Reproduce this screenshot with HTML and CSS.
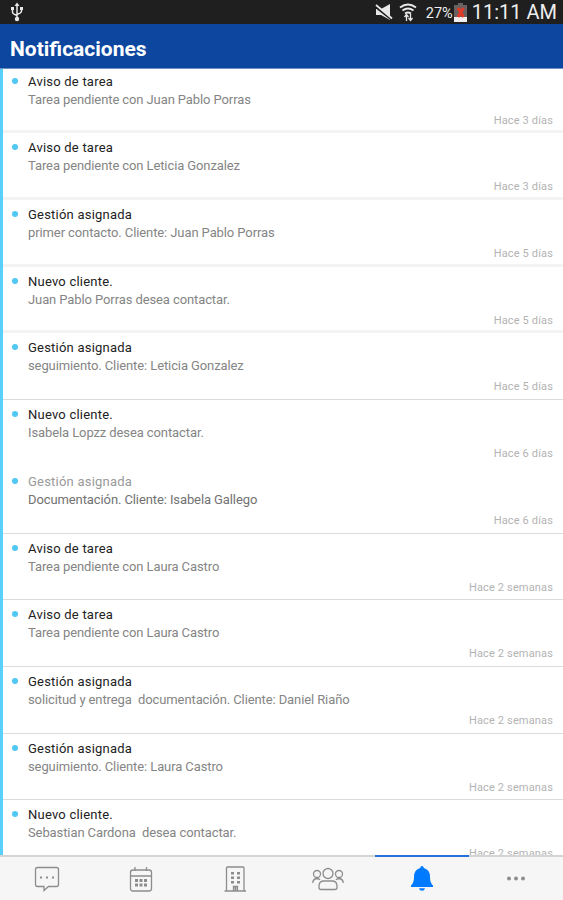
FILE: index.html
```html
<!DOCTYPE html>
<html lang="es">
<head>
<meta charset="utf-8">
<title>Notificaciones</title>
<link rel="stylesheet" href="styles.css">
</head>
<body>
<div class="app">
  <div class="status">
    <svg class="usb" width="14" height="20" viewBox="0 0 14 20" fill="none" stroke="#e8e8e8" stroke-width="1.500"><path d="M7 3v14M2.500 6.500v3.500q0 2 4.500 3.500M11.500 6.500v2.500q0 2-4.500 3.500"/><path d="M7 .5 9.500 4h-5zM1 5h3v3H1zM10 5h3v3h-3z" fill="#e8e8e8" stroke="none"/><circle cx="7" cy="17" r="2.200" fill="#e8e8e8" stroke="none"/></svg>
    <svg class="mute" width="18" height="17" viewBox="0 0 18 17"><path d="M1 5h5l9-5v16l-9-5H1z" fill="#e8e8e8"/><path d="M0 2.500 17 16" stroke="#1f1f1f" stroke-width="2"/><path d="M1 1 17 14.500" stroke="#e8e8e8" stroke-width="1.700"/></svg>
    <svg class="wifi" width="18" height="19" viewBox="0 0 18 19" fill="none" stroke="#e8e8e8" stroke-width="2"><path d="M1 4.500q8-6 16 0M3.500 7.500q5.500-4 11 0M6 10.500q3-2 6 0"/><path d="M7.500 18v-6M5.500 14l2-2.500 2 2.500M11.500 11v6M9.500 15l2 2.500 2-2.500" stroke-width="1.300"/></svg>
    <span class="percent">27%</span>
    <svg class="battery" width="13" height="19" viewBox="0 0 13 19"><path d="M4 0h5v2h4v17H0V2h4z" fill="#68615f"/><path d="M0 14h13v5H0z" fill="#f3eeee"/><path d="M4 5 9.500 14M9.500 5 4 14" stroke="#e23a26" stroke-width="3"/></svg>
    <span class="clock">11:11 AM</span>
  </div>
  <header class="header"><h1>Notificaciones</h1></header>
  <main class="list">
    <article class="row soft"><h2>Aviso de tarea</h2><p>Tarea pendiente con Juan Pablo Porras</p><time>Hace 3 días</time></article>
    <article class="row soft"><h2>Aviso de tarea</h2><p>Tarea pendiente con Leticia Gonzalez</p><time>Hace 3 días</time></article>
    <article class="row soft"><h2>Gestión asignada</h2><p>primer contacto. Cliente: Juan Pablo Porras</p><time>Hace 5 días</time></article>
    <article class="row soft"><h2>Nuevo cliente.</h2><p>Juan Pablo Porras desea contactar.</p><time>Hace 5 días</time></article>
    <article class="row"><h2>Gestión asignada</h2><p>seguimiento. Cliente: Leticia Gonzalez</p><time>Hace 5 días</time></article>
    <article class="row plain"><h2>Nuevo cliente.</h2><p>Isabela Lopzz desea contactar.</p><time>Hace 6 días</time></article>
    <article class="row read"><h2>Gestión asignada</h2><p>Documentación. Cliente: Isabela Gallego</p><time>Hace 6 días</time></article>
    <article class="row"><h2>Aviso de tarea</h2><p>Tarea pendiente con Laura Castro</p><time>Hace 2 semanas</time></article>
    <article class="row"><h2>Aviso de tarea</h2><p>Tarea pendiente con Laura Castro</p><time>Hace 2 semanas</time></article>
    <article class="row"><h2>Gestión asignada</h2><p>solicitud y entrega&nbsp; documentación. Cliente: Daniel Riaño</p><time>Hace 2 semanas</time></article>
    <article class="row"><h2>Gestión asignada</h2><p>seguimiento. Cliente: Laura Castro</p><time>Hace 2 semanas</time></article>
    <article class="row"><h2>Nuevo cliente.</h2><p>Sebastian Cardona&nbsp; desea contactar.</p><time>Hace 2 semanas</time></article>
  </main>
  <nav class="tabs">
    <a><svg width="28" height="28" viewBox="0 0 28 28"><path d="M4.500 2.500h19q2 0 2 2v15q0 2-2 2h-8L11 25.500v-4H4.500q-2 0-2-2v-15q0-2 2-2z"/><path class="fill" d="M7 11.500h2v2H7zM13 11.500h2v2h-2zM19 11.500h2v2h-2z"/></svg></a>
    <a><svg width="28" height="28" viewBox="0 0 28 28"><rect x="3.500" y="5" width="21" height="21" rx="2.500"/><path d="M3.500 11h21M8 2v4M19.500 2v4"/><path class="fill" d="M8 14h3v3H8zM12.500 14h3v3h-3zM17 14h3v3h-3zM8 18.500h3v3H8zM12.500 18.500h3v3h-3zM17 18.500h3v3h-3z"/></svg></a>
    <a><svg width="28" height="28" viewBox="0 0 28 28"><path d="M5.500 26V3q0-1 1-1h15.500q1 0 1 1v23M3.500 26h21.500M12.500 26v-4.500h4V26"/><path class="fill" d="M10 7h3v2.500h-3zM16 7h3v2.500h-3zM10 11.500h3V14h-3zM16 11.500h3V14h-3zM10 16h3v2.500h-3zM16 16h3v2.500h-3zM13.500 22h2v4h-2z"/></svg></a>
    <a><svg width="32" height="28" viewBox="0 0 32 28"><circle cx="16" cy="8.500" r="5"/><circle cx="5" cy="9" r="3.500"/><circle cx="27" cy="9" r="3.500"/><path d="M7 21q0-5 5-5h8q5 0 5 5v1.500q0 2-2 2H9q-2 0-2-2zM.8 18q0-4 4.200-4.500 2 0 3 1.500M31.200 18q0-4-4.200-4.500-2 0-3 1.500"/></svg></a>
    <a class="active"><svg width="28" height="28" viewBox="0 0 28 28"><path class="bell" d="M14 1q1.500 0 1.800 2Q22 4.500 22 12q0 6 3 8.500V22H3v-1.500Q6 18 6 12q0-7.500 6.200-9Q12.500 1 14 1zM11 23.200h6q-.5 2.600-3 2.600t-3-2.600z"/></svg></a>
    <a><svg width="28" height="28" viewBox="0 0 28 28"><g class="more"><circle cx="7" cy="13.500" r="2"/><circle cx="14" cy="13.500" r="2"/><circle cx="21" cy="13.500" r="2"/></g></svg></a>
  </nav>
</div>
</body>
</html>
```
FILE: styles.css
```css
* { box-sizing: border-box; }
body { margin: 0; font-family: Roboto, "Liberation Sans", sans-serif; background: #fff; }
.app { height: 900px; display: flex; flex-direction: column; overflow: hidden; }
.status { flex: none; height: 24px; background: #1f1f1f; color: #eee; display: flex; align-items: center; padding: 0 6px 0 10px; }
.mute { margin-left: auto; }
.wifi { margin-left: 6px; }
.percent { margin-left: 9px; font-size: 14.5px; letter-spacing: 0; padding-top: 2px; }
.battery { margin-left: 1px; }
.clock { margin-left: 5px; font-size: 20px; letter-spacing: 0; }
.header { flex: none; height: 44.500px; background: #0c469f; border-bottom: 1px solid #6f8fc6; display: flex; align-items: center; padding: 6px 10px 0; }
h1 { margin: 0; color: #fff; font-size: 21px; font-weight: 700; line-height: 28px; }
.list { flex: 1; min-height: 0; overflow: hidden; border-left: 3px solid #59d0fb; }
.row { height: 66.720px; border-bottom: 1.500px solid #dcdbdd; padding: 5px 10px 0 25px; position: relative; display: flex; flex-direction: column; }
.row:first-child { height: 64.800px; padding-top: 3px; }
.row.soft { border-bottom: 3px solid #f3f3f3; }
.row.plain { border-bottom-color: transparent; }
.row::before { content: ""; position: absolute; left: 9px; top: 11px; width: 6px; height: 6px; border-radius: 50%; background: #4fc8f4; }
.row:first-child::before { top: 9px; }
h2 { margin: 0; font-size: 13px; line-height: 19px; font-weight: 400; letter-spacing: .22px; color: #222; }
.read h2 { color: #999; }
p { margin: 0; font-size: 13px; line-height: 18px; letter-spacing: -.1px; color: #858585; white-space: nowrap; }
.read p { color: #727272; }
time { align-self: flex-end; font-size: 11px; line-height: 14px; margin-top: 5px; letter-spacing: .15px; color: #b3b3b3; white-space: nowrap; }
.tabs { flex: none; height: 45px; background: #f6f6f6; border-top: 2px solid #d4d4d4; display: grid; grid-template-columns: repeat(6, 1fr); }
.tabs a { display: flex; align-items: center; justify-content: center; border-top: 2px solid transparent; margin-top: -2px; }
.tabs .active { border-top-color: #286fdc; }
.tabs svg { fill: none; stroke: #8d8d8d; stroke-width: 1.300; }
.tabs .fill, .tabs .more { fill: #8d8d8d; stroke: none; }
.tabs .bell { fill: #007aff; stroke: none; }
```
